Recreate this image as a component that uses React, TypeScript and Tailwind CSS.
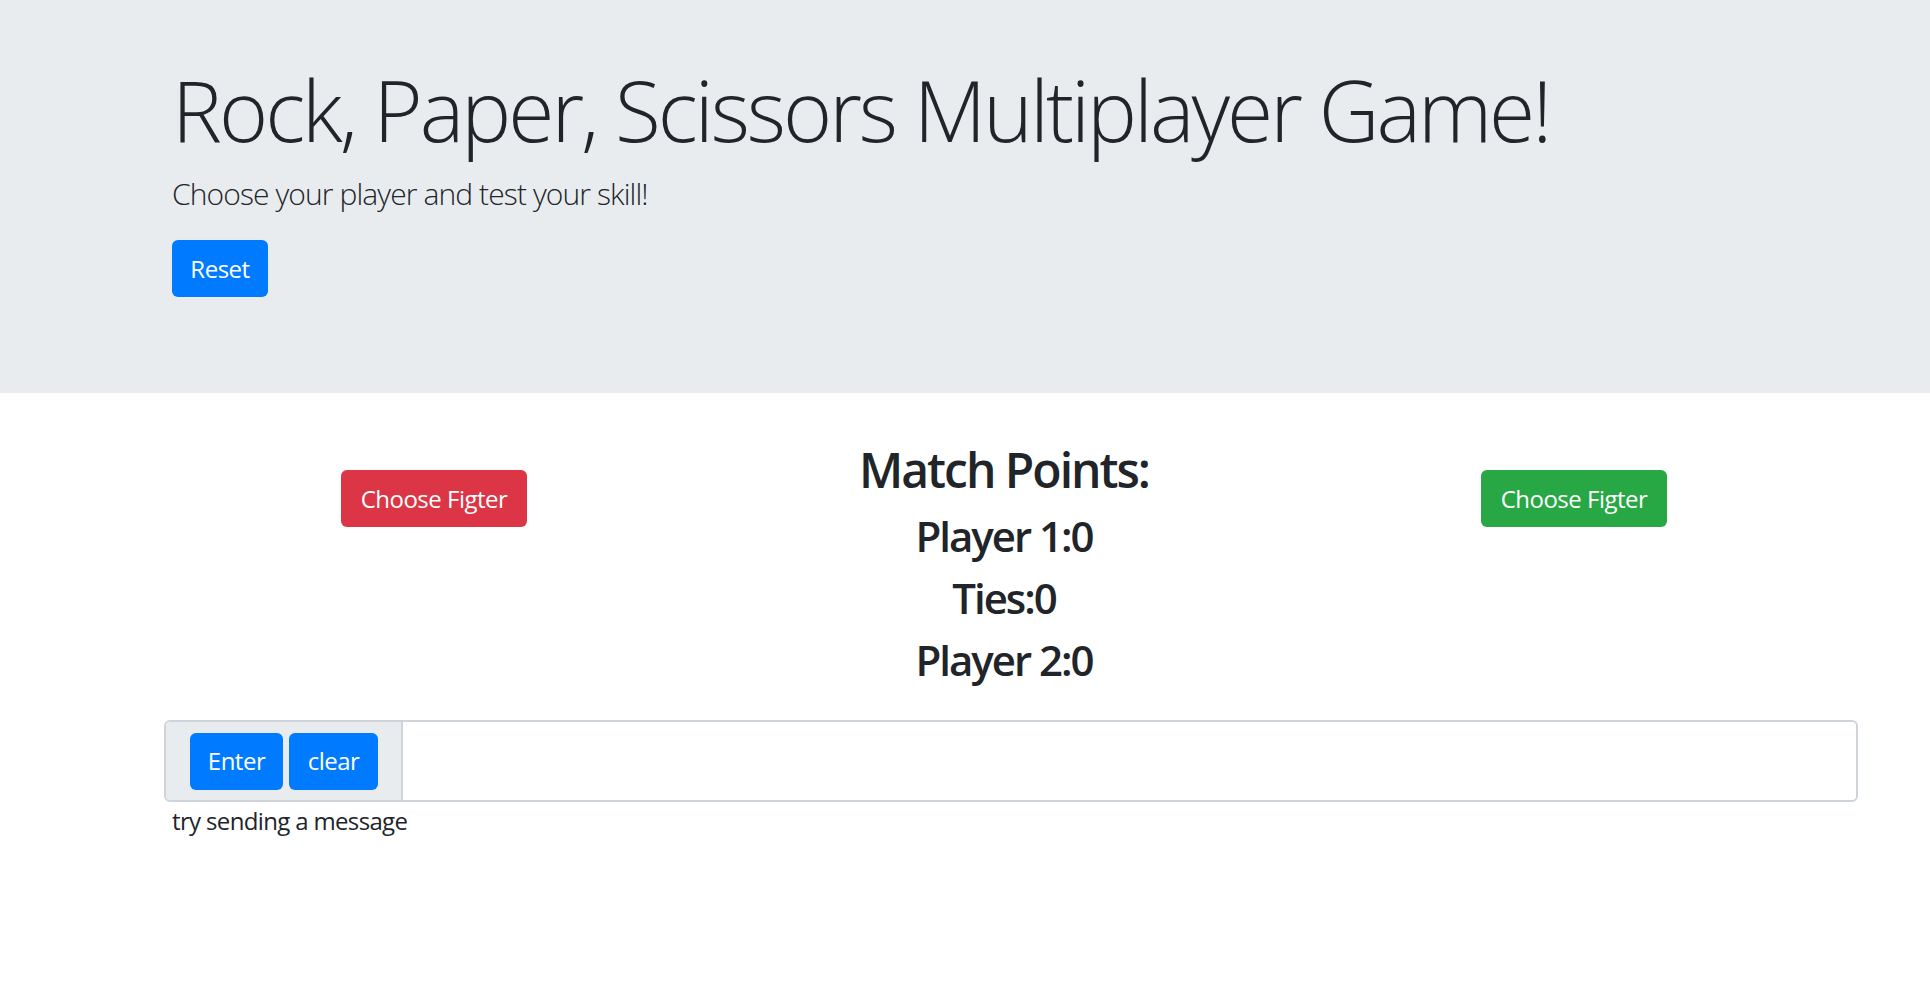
const App = () => {
  return (
    <div className="min-h-[986px] bg-white text-[#212529] font-['Open_Sans','Noto_Sans',sans-serif]">
      {/* jumbotron */}
      <div className="bg-[#e9ecef] h-[393px] pt-[60px] pl-[172px]">
        <h1 className="text-[84px] font-light leading-[100px] tracking-[-3px] whitespace-nowrap">
          Rock, Paper, Scissors Multiplayer Game!
        </h1>
        <p className="text-[30px] font-light leading-[45px] tracking-[-0.9px] mt-[11px]">
          Choose your player and test your skill!
        </p>
        <button className="mt-[24px] w-[96px] h-[57px] rounded-[6px] bg-[#007bff] text-white text-[24px] leading-[36px] tracking-[-0.5px]">
          Reset
        </button>
      </div>

      {/* scoreboard */}
      <div className="mt-[48px] ml-[149px] w-[1710px] grid grid-cols-3">
        <div className="flex justify-center">
          <button className="mt-[29px] w-[186px] h-[57px] rounded-[6px] bg-[#dc3545] text-white text-[24px] leading-[36px] tracking-[-0.5px]">
            Choose Figter
          </button>
        </div>
        <div className="text-center">
          <h2 className="text-[48px] font-semibold leading-[58px] tracking-[-2px] mb-[12px]">
            Match Points:
          </h2>
          <h3 className="text-[42px] font-semibold leading-[50px] tracking-[-2px] mb-[12px]">
            Player 1:0
          </h3>
          <h3 className="text-[42px] font-semibold leading-[50px] tracking-[-2px] mb-[12px]">
            Ties:0
          </h3>
          <h3 className="text-[42px] font-semibold leading-[50px] tracking-[-2px] mb-[12px]">
            Player 2:0
          </h3>
        </div>
        <div className="flex justify-center">
          <button className="mt-[29px] w-[186px] h-[57px] rounded-[6px] bg-[#28a745] text-white text-[24px] leading-[36px] tracking-[-0.5px]">
            Choose Figter
          </button>
        </div>
      </div>

      {/* chat input */}
      <div className="mt-[23px] ml-[164px] w-[1694px] h-[82px] flex border-2 border-[#ced4da] rounded-[6px] overflow-hidden">
        <div className="flex items-center gap-[6px] bg-[#e9ecef] border-r-2 border-[#ced4da] pl-[24px] pr-[23px]">
          <button className="w-[93px] h-[57px] rounded-[6px] bg-[#007bff] text-white text-[24px] leading-[36px] tracking-[-0.5px]">
            Enter
          </button>
          <button className="w-[89px] h-[57px] rounded-[6px] bg-[#007bff] text-white text-[24px] leading-[36px] tracking-[-0.5px]">
            clear
          </button>
        </div>
        <input className="flex-1 outline-none px-[18px] text-[24px]" type="text" />
      </div>
      <p className="ml-[172px] mt-[1px] text-[24px] leading-[36px] tracking-[-0.65px]">try sending a message</p>
    </div>
  );
};

export default App;
